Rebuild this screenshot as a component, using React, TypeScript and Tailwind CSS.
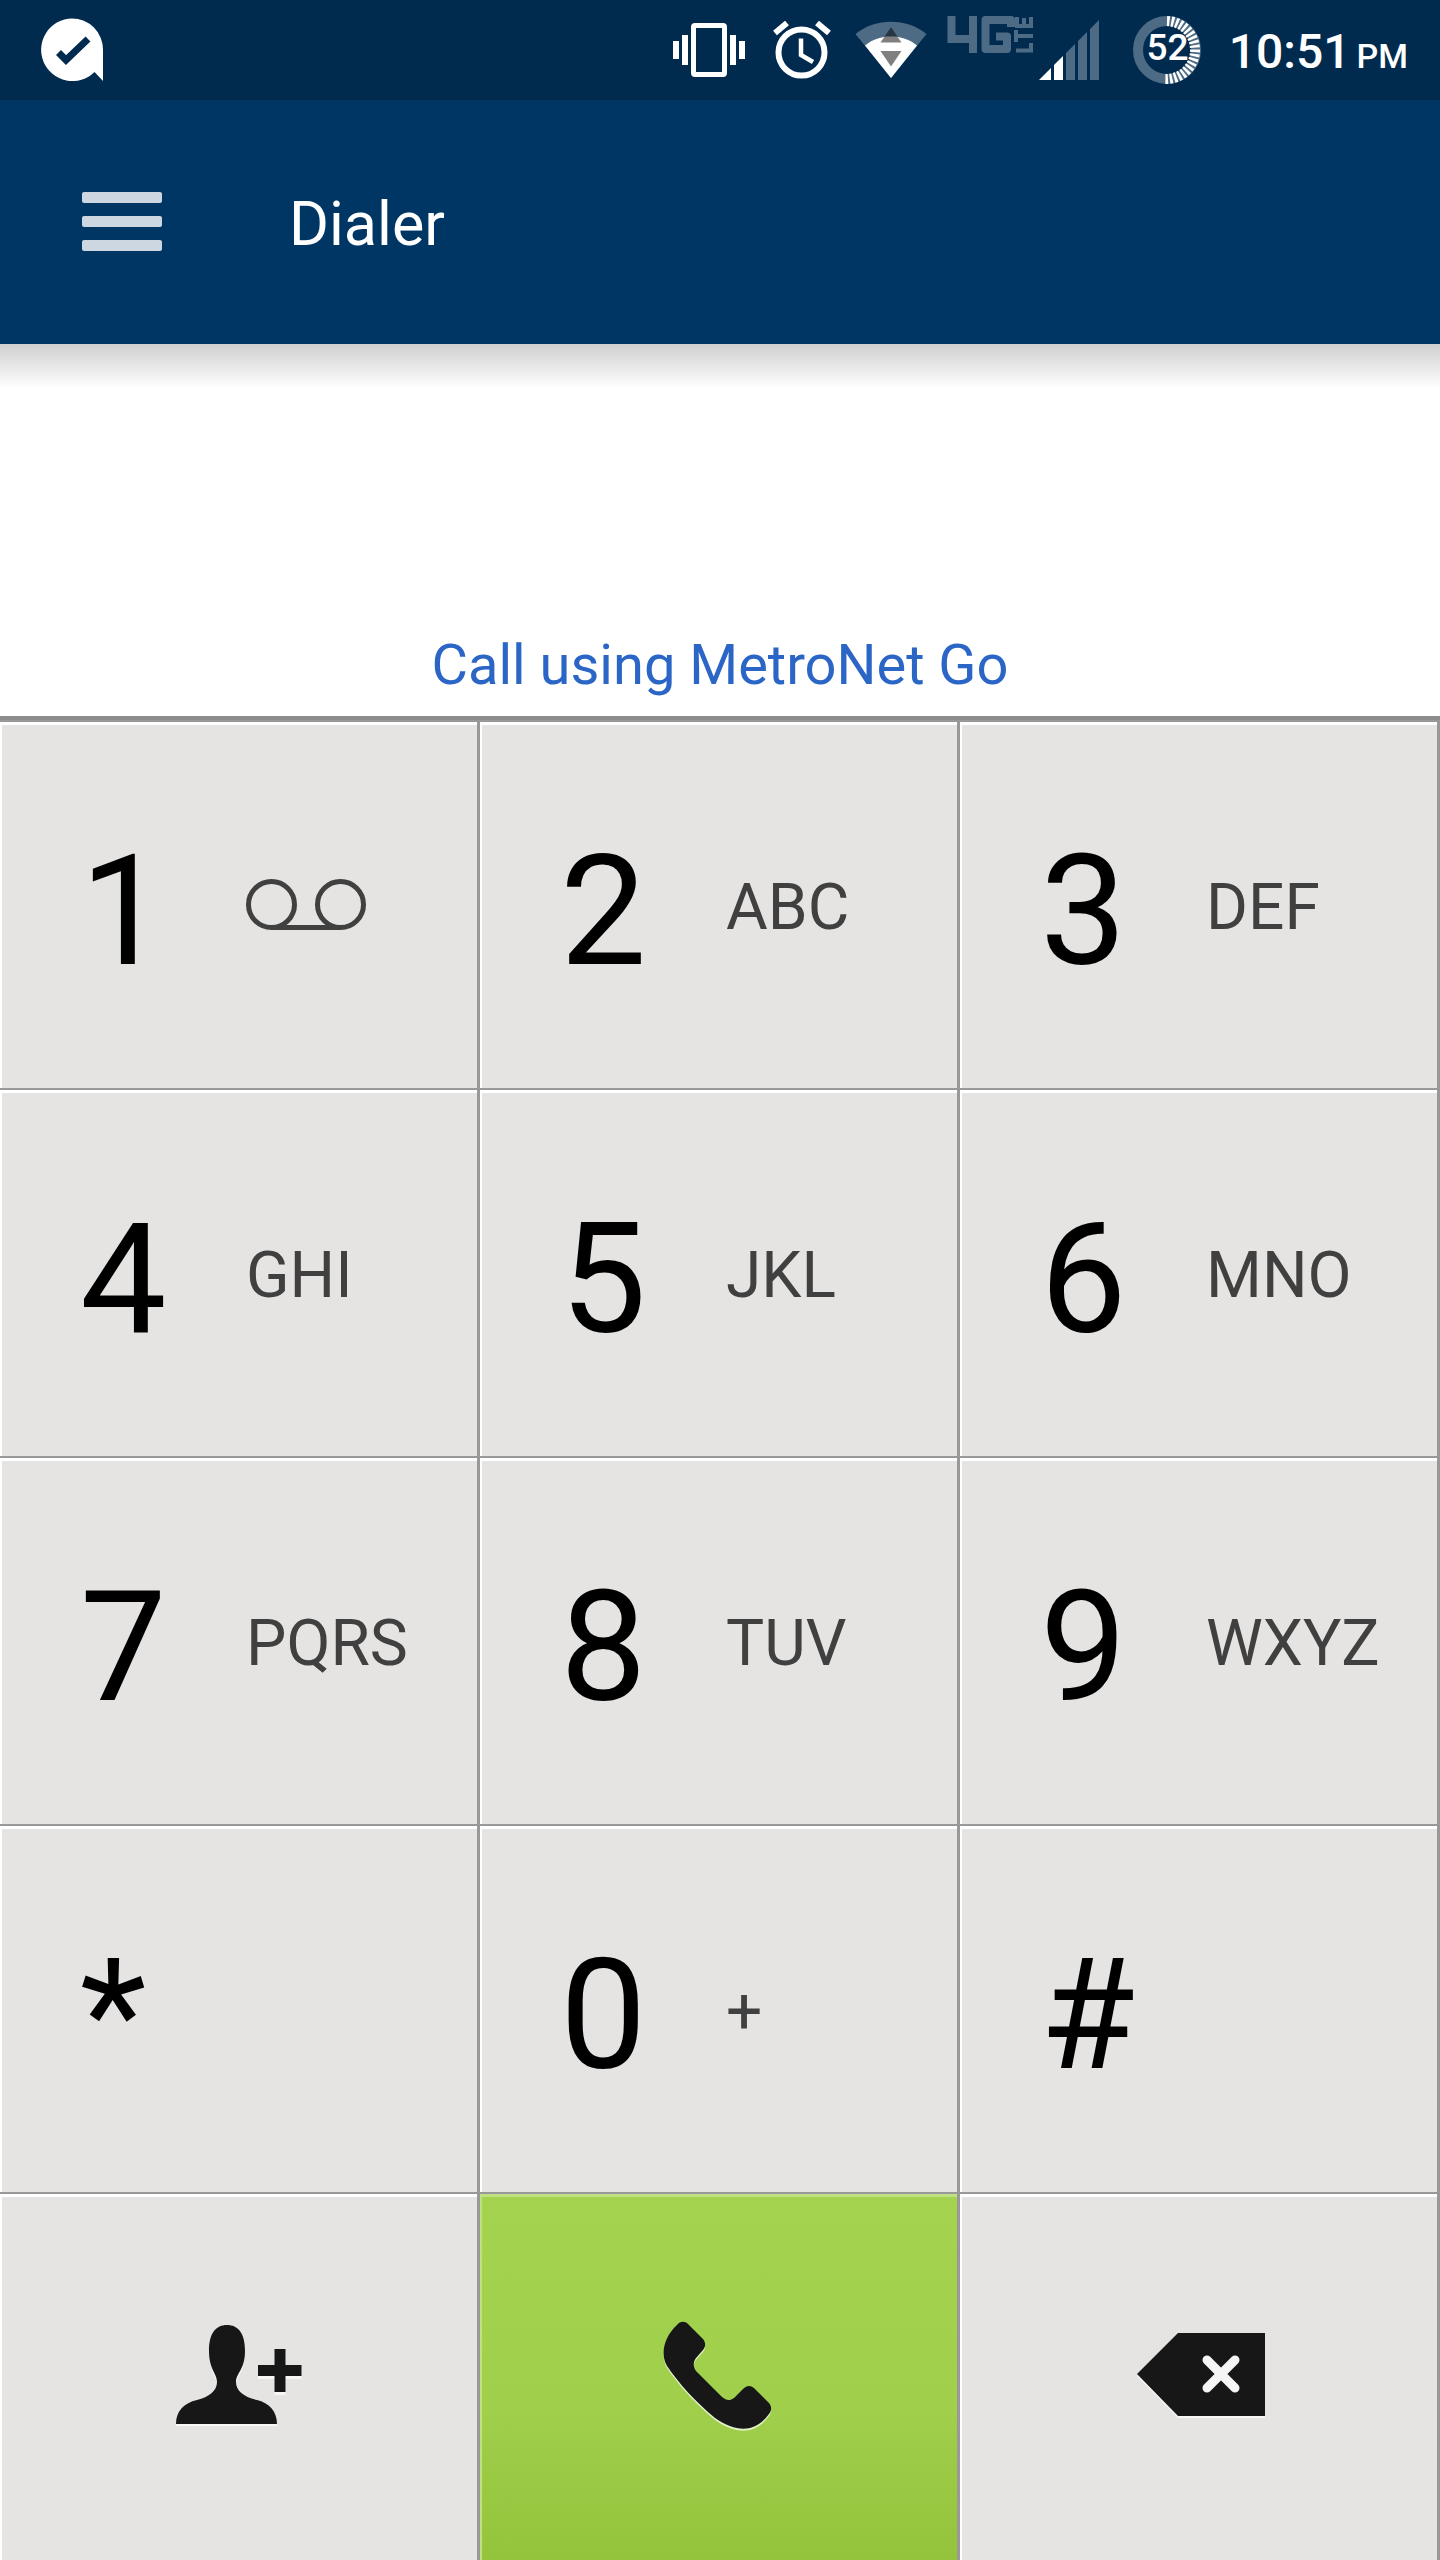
import React, { useState } from 'react';

interface KeyDef {
  digit: string;
  letters?: string;
}

const KEYS: KeyDef[] = [
  { digit: '1' },
  { digit: '2', letters: 'ABC' },
  { digit: '3', letters: 'DEF' },
  { digit: '4', letters: 'GHI' },
  { digit: '5', letters: 'JKL' },
  { digit: '6', letters: 'MNO' },
  { digit: '7', letters: 'PQRS' },
  { digit: '8', letters: 'TUV' },
  { digit: '9', letters: 'WXYZ' },
  { digit: '*' },
  { digit: '0', letters: '+' },
  { digit: '#' },
];

const VoicemailIcon = () => (
  <svg className="h-[52px] w-[120px]" viewBox="0 0 120 52" fill="none" stroke="#404040" strokeWidth="5">
    <circle cx="25.5" cy="25.5" r="23" />
    <circle cx="94.5" cy="25.5" r="23" />
    <path d="M25.5 48.5H94.5" />
  </svg>
);

const ChatCheckIcon = () => (
  <svg className="h-[64px] w-[64px]" viewBox="0 0 64 64">
    <path d="M32 0.5A31 31 0 0 1 63 31.5V63L54.5 54A31.3 31.3 0 1 1 32 0.5Z" fill="#fff" />
    <path d="M18.5 34.5L26 42L48 21" fill="none" stroke="#002b4f" strokeWidth="7" />
  </svg>
);

const VibrateIcon = () => (
  <svg className="h-[54px] w-[72px]" viewBox="0 0 72 54" fill="#fff">
    <rect x="0" y="18" width="6" height="18" />
    <rect x="9" y="12" width="6" height="30" />
    <rect x="20.5" y="2.5" width="31" height="49" rx="1.5" fill="none" stroke="#fff" strokeWidth="5" />
    <rect x="57" y="12" width="6" height="30" />
    <rect x="66" y="18" width="6" height="18" />
  </svg>
);

const AlarmIcon = () => (
  <svg className="h-[58px] w-[58px]" viewBox="0 0 58 58" fill="none" stroke="#fff">
    <circle cx="28.5" cy="31.5" r="23" strokeWidth="6" />
    <path d="M2 12L14 2M56 12L44 2" strokeWidth="6" />
    <path d="M28 17.5V34L40 41" strokeWidth="4.5" />
  </svg>
);

const WifiIcon = () => (
  <svg className="h-[58px] w-[72px]" viewBox="0 0 72 58">
    <path d="M36 57L0.5 13C20 -3.5 52 -3.5 71.5 13Z" fill="#4d6b84" />
    <path d="M36 57L10 24.5C24 12.5 48 12.5 62 24.5Z" fill="#fff" />
    <path d="M36 6L46.5 21.5H25.5Z" fill="#808080" />
    <path d="M36 6L42.5 15.500H29.5Z" fill="#263644" />
    <path d="M25.5 30H46.5L36 45.5Z" fill="#808080" />
  </svg>
);

// network type badge sits up and left of the signal steps
const NetworkIcon = () => (
  <svg className="h-[68px] w-[154px]" viewBox="0 0 154 68">
    <g fill="none" stroke="#4d6b84">
      <path d="M4.500 0V23H26M26 0V37" strokeWidth="8" />
      <path d="M64 11V4H38.500V33H60V20.500H49" strokeWidth="8" strokeLinejoin="round" />
      <path d="M69 34.5H84V27M69 14V26M69 20H86M70 1V10H84V1M77 2V10" strokeWidth="4" />
    </g>
    <path d="M92 64L104 52V64Z" fill="#fff" />
    <path d="M107 64V49L116 40V64Z" fill="#fff" />
    <path d="M119 64V37L128 28V64ZM131 64V25L140 16V64ZM143 64V13L152 4V64Z" fill="#4d6b84" />
  </svg>
);

const BatteryIcon = () => (
  <svg className="h-[68px] w-[68px]" viewBox="0 0 68 68">
    <circle cx="34" cy="34" r="29" fill="none" stroke="#4d6b84" strokeWidth="10" />
    <path d="M34 5A29 29 0 0 1 32 63" fill="none" stroke="#fff" strokeWidth="10" strokeDasharray="2.6 1.8" />
    <text x="34.5" y="44" textAnchor="middle" fill="#fff" fontSize="37" className="font-medium">52</text>
  </svg>
);

const AddContactIcon = () => (
  <svg className="h-[104px] w-[128px]" viewBox="0 0 128 104">
    <g fill="#fff" opacity="0.7" transform="translate(0 2)">
      <path d="M1 99C1 86 9 78 22 75C34 72 42 66 42 58C42 50 34 45 34 26C34 8 41 0 52 0C63 0 70 8 70 26C70 45 61 50 61 58C61 66 69 72 82 75C94 78 102 86 102 99Z" />
      <path d="M99.5 25H110.5V41H126.5V52H110.5V68H99.5V52H83V41H99.5Z" />
    </g>
    <g fill="#171717">
      <path d="M1 99C1 86 9 78 22 75C34 72 42 66 42 57C42 48 34 45 34 26C34 8 41 0 52 0C63 0 70 8 70 26C70 45 61 48 61 57C61 66 69 72 82 75C94 78 102 86 102 99Z" />
      <path d="M99.5 24H110.5V40H126.5V51H110.5V67H99.5V51H83V40H99.5Z" />
    </g>
  </svg>
);

const HANDSET =
  'M14 4C17 0 22 0 25 3L39 17C43 21 43 25 40 29L33 37C30 41 30 46 33 50L58 75C63 80 67 80 71 77L80 68C84 64 88 64 92 68L105 81C109 85 109 89 106 93C92 112 74 112 52 97C34 82 16 63 4 45C-3 33 1 16 14 4Z';

const PhoneIcon = () => (
  <svg className="h-[112px] w-[112px]" viewBox="0 0 112 112">
    <path d={HANDSET} fill="#fff" opacity="0.7" transform="translate(0 2)" />
    <path d={HANDSET} fill="#171717" />
  </svg>
);

const BackspaceIcon = () => (
  <svg className="h-[88px] w-[128px]" viewBox="0 0 128 88">
    <path d="M0 43L41 3H128V85H41Z" fill="#fff" opacity="0.7" />
    <path d="M0 41L41 0H128V83H41Z" fill="#171717" />
    <path d="M70 27L98 55M98 27L70 55" stroke="#f5f5f5" strokeWidth="9" strokeLinecap="round" />
  </svg>
);

const CELL =
  'border-t-2 border-r-[3px] border-[#999999] shadow-[inset_2px_3px_1px_#ffffff] bg-[#e5e4e2] focus:outline-none';

export default function App() {
  const [number, setNumber] = useState('');

  return (
    <div className="flex min-h-screen flex-col bg-white font-['Roboto',sans-serif]">
      {/* Status bar */}
      <div className="flex h-[100px] items-center justify-between bg-[#002b4f] pr-8 pl-10 text-white">
        <ChatCheckIcon />
        <div className="flex items-center">
          <VibrateIcon />
          <div className="w-7" />
          <AlarmIcon />
          <div className="w-6" />
          <WifiIcon />
          <div className="w-5" />
          <NetworkIcon />
          <div className="w-8" />
          <BatteryIcon />
          <div className="ml-7 flex items-baseline gap-[6px] pt-1 font-medium">
            <span className="text-[48px]">10:51</span>
            <span className="text-[34px]">PM</span>
          </div>
        </div>
      </div>

      {/* App bar */}
      <header className="flex h-[244px] items-center bg-[#003663] pl-[82px]">
        <button aria-label="Menu" className="flex flex-col gap-[13px] pb-[2px]">
          <span className="h-[11px] w-20 rounded-xs bg-[#ccd7e2]" />
          <span className="h-[11px] w-20 rounded-xs bg-[#ccd7e2]" />
          <span className="h-[11px] w-20 rounded-xs bg-[#ccd7e2]" />
        </button>
        <h1 className="pt-[6px] pl-[127px] text-[61px] text-white">Dialer</h1>
      </header>

      {/* Number display */}
      <div className="flex h-[372px] flex-col bg-linear-to-b from-[#d0d0d0] via-white via-12% to-white">
        <input
          aria-label="Phone number"
          className="w-full min-w-0 flex-1 px-10 text-center text-[96px] focus:outline-none"
          value={number}
          onChange={(e) => setNumber(e.target.value)}
        />
        <p className="pb-[9px] text-center text-[56px] text-[#2b66c6]">Call using MetroNet Go</p>
      </div>

      {/* Keypad */}
      <div className="grid flex-1 auto-rows-fr grid-cols-3 border-t-4 border-[#8c8c8a]">
        {KEYS.map((key) => (
          <button
            key={key.digit}
            className={`${CELL} flex items-center pl-20 text-left`}
            onClick={() => setNumber(number + key.digit)}
          >
            <span className="w-[166px] pt-[14px] text-[154px] leading-none text-black">{key.digit}</span>
            {key.digit === '1' && <VoicemailIcon />}
            {key.letters && (
              <span className="pt-[6px] text-[64px] leading-none text-[#404040]">{key.letters}</span>
            )}
          </button>
        ))}
        <button aria-label="Add contact" className={`${CELL} flex items-center justify-center`}>
          <AddContactIcon />
        </button>
        <button
          aria-label="Call"
          className="flex items-center justify-center border-t-2 border-r-[3px] border-[#999999] bg-linear-to-b from-[#a3d34f] via-[#9fcf4b] via-60% to-[#94c43b] shadow-[inset_2px_3px_1px_#c0e283] focus:outline-none"
        >
          <PhoneIcon />
        </button>
        <button
          aria-label="Delete"
          className={`${CELL} flex items-center justify-center pl-1`}
          onClick={() => setNumber(number.slice(0, -1))}
        >
          <BackspaceIcon />
        </button>
      </div>
    </div>
  );
}
